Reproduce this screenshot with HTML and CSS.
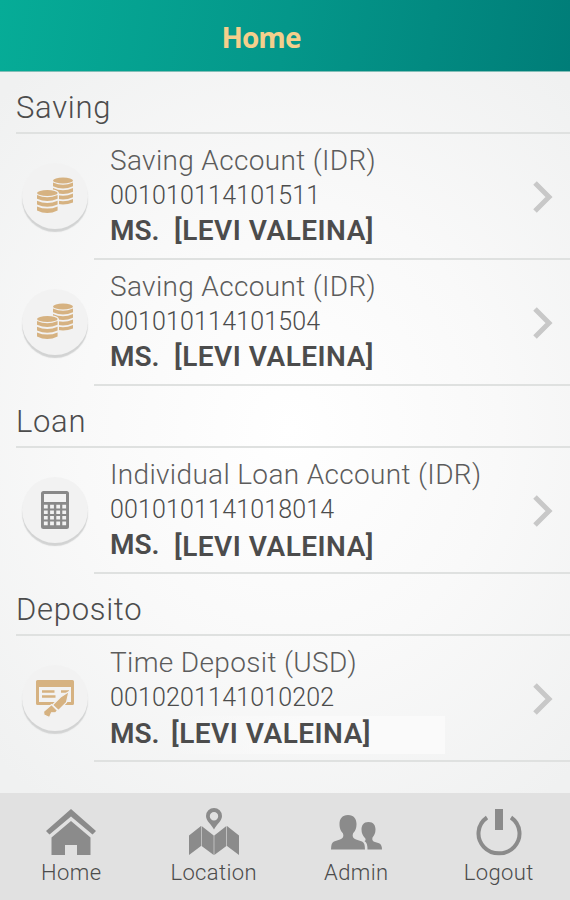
FILE: index.html
```
<!DOCTYPE html>
<html lang="en">

<head>
    <meta charset="UTF-8" />
    <meta name="viewport" content="width=device-width, initial-scale=1.0" />
    <title>Home</title>
    <link rel="stylesheet" href="styles.css">
</head>

<body>
    <!-- shared icons -->
    <svg class="sprite" width="0" height="0">
        <symbol id="coins" viewBox="0 0 40 40">
            <ellipse cx="28" cy="4.500" rx="10" ry="3" />
            <path d="M18 6.500q10 4.400 20 0v3.800q-10 4.400-20 0zM18 12q10 4.400 20 0v3.800q-10 4.400-20 0zM18 17.500q10 4.400 20 0v3.800q-10 4.400-20 0zM18 23q10 4.400 20 0v3.500q-10 4-20 0z" />
            <path class="cut" d="M0 17q1-4 12-4t12 4v22H0z" />
            <ellipse cx="12.300" cy="17" rx="10.300" ry="3" />
            <path d="M2 19q10.300 4.400 20.600 0v3.800q-10.300 4.400-20.600 0zM2 24.700q10.300 4.400 20.600 0v3.800q-10.300 4.400-20.600 0zM2 30.400q10.300 4.400 20.600 0v4q-10.300 5-20.600 0z" />
        </symbol>
        <symbol id="arrow" viewBox="0 0 22 34">
            <path d="M3 3l14 14L3 31" fill="none" stroke="#c8c8c8" stroke-width="5" />
        </symbol>
    </svg>

    <div class="header">
        <h1>Home</h1>
    </div>

    <div class="main">
        <h2>Saving</h2>
        <div class="row">
            <div class="icon gold"><svg width="40" height="40"><use href="#coins" /></svg></div>
            <div class="info">
                <p class="type">Saving Account (IDR)</p>
                <p class="number">001010114101511</p>
                <p class="name"><span class="ms">MS.</span><span>[LEVI VALEINA]</span></p>
            </div>
            <svg class="arrow" width="22" height="34"><use href="#arrow" /></svg>
        </div>
        <div class="row">
            <div class="icon gold"><svg width="40" height="40"><use href="#coins" /></svg></div>
            <div class="info">
                <p class="type">Saving Account (IDR)</p>
                <p class="number">001010114101504</p>
                <p class="name"><span class="ms">MS.</span><span>[LEVI VALEINA]</span></p>
            </div>
            <svg class="arrow" width="22" height="34"><use href="#arrow" /></svg>
        </div>

        <h2>Loan</h2>
        <div class="row">
            <div class="icon">
                <svg width="40" height="40" viewBox="0 0 40 40">
                    <rect x="6" y="1" width="28" height="38" rx="2.5" fill="#898989" />
                    <rect x="9" y="4" width="22" height="8" fill="#f2f2f2" />
                    <path d="M10.800 14.800v22M17 14.800v22M23.200 14.800v22M29.200 14.800v22" stroke="#f2f2f2" stroke-width="3.8" stroke-dasharray="3.6 2" />
                </svg>
            </div>
            <div class="info">
                <p class="type">Individual Loan Account (IDR)</p>
                <p class="number">0010101141018014</p>
                <p class="name"><span class="ms">MS.</span><span class="lower">[LEVI VALEINA]</span></p>
            </div>
            <svg class="arrow" width="22" height="34"><use href="#arrow" /></svg>
        </div>

        <h2>Deposito</h2>
        <div class="row last">
            <div class="icon gold">
                <svg width="40" height="40" viewBox="0 0 40 40">
                    <path fill-rule="evenodd" d="M2.500 2h35q1.500 0 1.500 1.500v22q0 1.500-1.500 1.500h-35q-1.500 0-1.500-1.500v-22q0-1.500 1.500-1.500zM4 9v15h32V9z" />
                    <path d="M7 12.200h12.500v2.600H7zM7 17.200h13.500v2.600H7zM26 12.200h8v2.600h-8z" />
                    <path class="pen" d="M34 13.500l-2.500 11-8 8-6-5.500 8-8z" />
                    <path class="pen" d="M16.500 26.500l6 6-2 2.300-4 0-2 4.700-5.500-2.500-.5-3.500z" />
                </svg>
            </div>
            <div class="info">
                <p class="type">Time Deposit (USD)</p>
                <p class="number">0010201141010202</p>
                <p class="name"><span class="ms">MS.</span><span class="patch">[LEVI VALEINA]</span></p>
            </div>
            <svg class="arrow" width="22" height="34"><use href="#arrow" /></svg>
        </div>
    </div>

    <div class="footer">
        <div class="tab">
            <svg width="52" height="48" viewBox="0 0 52 48">
                <path d="M26 1L51 23l-3.500 3.500L26 8.500 4.500 26.500 1 23z" />
                <path d="M26 13l19.500 16.500V47H32V37H20v10H6.500V29.500z" />
            </svg>
            <span>Home</span>
        </div>
        <div class="tab">
            <svg width="52" height="48" viewBox="0 0 52 48">
                <path fill-rule="evenodd" d="M26 21.500C23.500 16.500 18 13 18 8a8 8 0 0 1 16 0c0 5-5.500 8.500-8 13.500zM26 4a4.200 4.200 0 1 0 0 8.400a4.200 4.200 0 1 0 0-8.400z" />
                <path d="M1 27.500l12-9.500v20L1 47zM13.600 18l12.100 9.500V47L13.600 38zM26.300 27.500L38.400 18v20l-12.100 9zM39 18l12 9.500V47l-12-9z" />
            </svg>
            <span>Location</span>
        </div>
        <div class="tab">
            <svg width="52" height="48" viewBox="0 0 52 48">
                <path d="M18 7c6 0 8.500 4 8.500 9 0 5-1.500 7-3.500 9.500-1 3 0 5 3 6l6 2q3 1 3 8H1q0-7 3-8l6-2c3-1 4-3 3-6C11 23 9.500 21 9.500 16c0-5 2.500-9 8.500-9z" />
                <path d="M38.500 14c5 0 7 3.500 7 7.500s-1.500 6-3 8c-.8 2.500.5 4 2.500 4.500l4 1.300Q52 36.500 52 41.500H37.500c0-4-.5-7-3-8.500 1.500-.5 1.500-2 0-3.500-1.500-2-3-4-3-8s2-7.500 7-7.500z" />
            </svg>
            <span>Admin</span>
        </div>
        <div class="tab">
            <svg width="52" height="48" viewBox="0 0 52 48">
                <path d="M14 9.500A20.500 19.800 0 1 0 38 9.500" fill="none" stroke="#8b8b8b" stroke-width="4" />
                <path d="M22 1h8v21h-8z" />
            </svg>
            <span>Logout</span>
        </div>
    </div>
</body>

</html>
```
FILE: styles.css
```
* {
    margin: 0;
    padding: 0;
    box-sizing: border-box;
}

body {
    width: 570px;
    height: 900px;
    display: flex;
    flex-direction: column;
    overflow: hidden;
    font-family: Roboto, sans-serif;
    color: #4c4c4c;
    background: radial-gradient(ellipse 420px 460px at 290px 430px, #fff 0%, #f9f9f9 50%, #f0f1f1 100%);
}

.sprite {
    position: absolute;
}

.header {
    height: 72px;
    padding-top: 16px;
    padding-right: 48px;
    text-align: center;
    background: linear-gradient(100deg, #06ac97 0%, #04978a 50%, #007d78 100%);
    border-bottom: 1px solid #82beb7;
}

.header h1 {
    font: bold 28px/42px "Open Sans", sans-serif;
    letter-spacing: -0.9px;
    color: #f5cf8c;
}

.main {
    flex: 1;
}

.main h2 {
    height: 62px;
    margin-left: 16px;
    padding-top: 17px;
    font-size: 31px;
    line-height: 38px;
    font-weight: 300;
    letter-spacing: 0.7px;
    border-bottom: 2px solid #dfe1e0;
}

.row {
    height: 126px;
    display: flex;
    padding-left: 22px;
}

.icon {
    width: 66px;
    height: 66px;
    margin-top: 29px;
    margin-right: 6px;
    padding-top: 13px;
    border-radius: 50%;
    text-align: center;
    background: #f2f2f2;
    box-shadow: 0 3px 1px #d2d3d3;
}

.gold {
    fill: #d6b281;
}

.cut {
    fill: #f2f2f2;
}

.pen {
    stroke: #f2f2f2;
    stroke-width: 1.2;
}

.info {
    flex: 1;
    padding: 10px 0 0 16px;
    border-bottom: 2px solid #dfe1e0;
}

.type {
    font-size: 28px;
    line-height: 34px;
    font-weight: 300;
    letter-spacing: 0.34px;
    color: #5c5c5c;
}

.number {
    font-size: 25px;
    line-height: 35px;
    font-weight: 300;
    letter-spacing: 0.15px;
}

.name {
    display: flex;
    font-size: 28px;
    line-height: 36px;
    font-weight: 600;
    letter-spacing: 0.5px;
}

.ms {
    width: 64px;
    letter-spacing: 0;
}

.lower {
    padding-top: 2px;
}

.last .name {
    padding-top: 1px;
}

.last .ms {
    width: 61px;
}

/* lighter strip behind the last name */
.patch {
    width: 274px;
    height: 38px;
    background: linear-gradient(90deg, transparent, #fafafa 50%);
}

.arrow {
    align-self: center;
    margin-right: 16px;
    margin-left: -38px;
}

.footer {
    height: 107px;
    display: grid;
    grid-template-columns: repeat(4, 1fr);
    background: #e1e1e1;
    fill: #8b8b8b;
}

.tab {
    display: flex;
    flex-direction: column;
    align-items: center;
    padding-top: 15px;
    font-size: 22px;
    line-height: 34px;
    font-weight: 300;
    letter-spacing: 0.4px;
}
```
